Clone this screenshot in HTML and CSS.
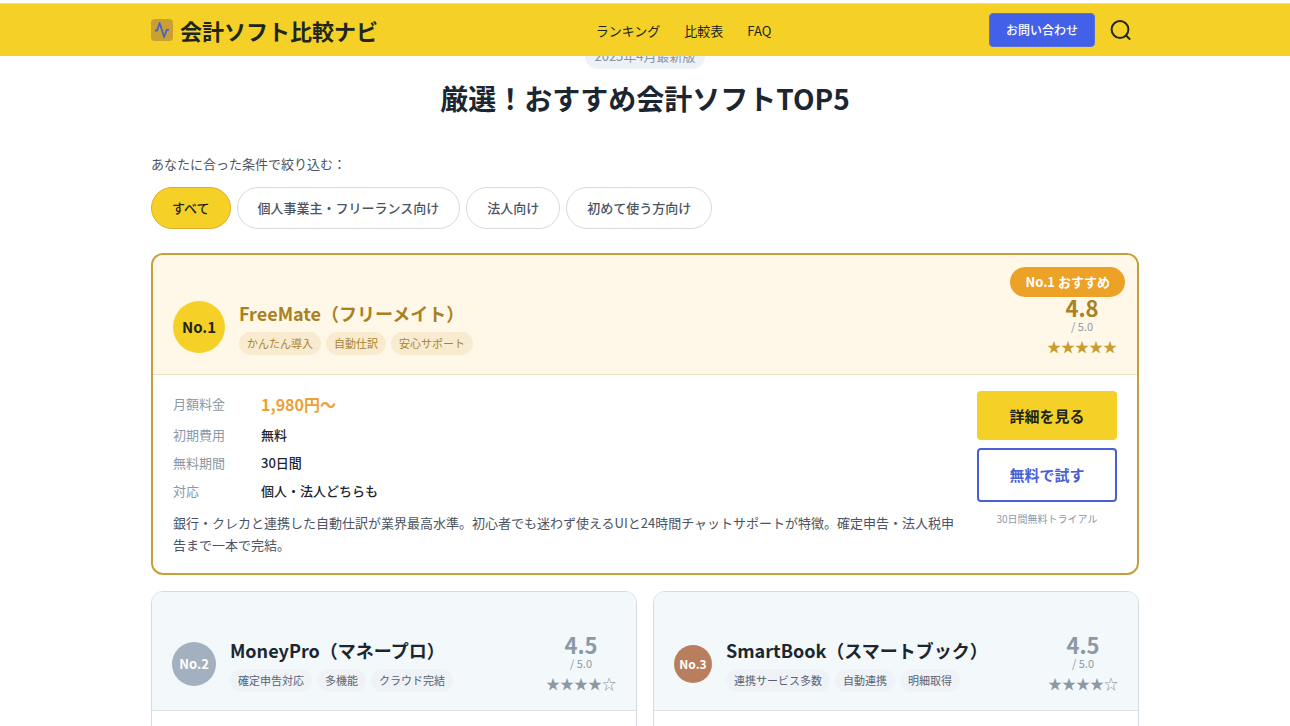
FILE: index.html
```
<!DOCTYPE html>
<html lang="ja">
<head>
    <meta charset="UTF-8">
    <meta name="viewport" content="width=device-width, initial-scale=1.0">
    <title>会計ソフト比較ナビ</title>
    <link rel="stylesheet" href="styles.css">
</head>
<body>
<header class="site-header">
    <div class="container header-inner">
        <a href="#" class="logo">
            <svg class="logo-icon" viewBox="0 0 22 22" aria-hidden="true">
                <rect width="22" height="22" rx="4" fill="#c9a034"/>
                <path d="M4 11.5h2.2L8.6 4l4.6 14 2.6-7.2H18" fill="none" stroke="#4860cc" stroke-width="1.8" stroke-linejoin="round"/>
            </svg>
            <span>会計ソフト比較ナビ</span>
        </a>
        <nav class="nav">
            <a href="#ranking">ランキング</a>
            <a href="#compare">比較表</a>
            <a href="#faq">FAQ</a>
        </nav>
        <div class="header-actions">
            <a href="#contact" class="btn-contact">お問い合わせ</a>
            <button class="btn-search" type="button" aria-label="検索">
                <svg viewBox="0 0 22 22" width="22" height="22" fill="none" stroke="#20261c" stroke-width="2">
                    <circle cx="10" cy="10.5" r="8.4"/>
                    <path d="M15.8 16.2l4.4 4.4"/>
                </svg>
            </button>
        </div>
    </div>
</header>

<main class="container" id="ranking">
    <div class="section-head">
        <span class="update-label">2025年4月最新版</span>
        <h1>厳選！おすすめ会計ソフトTOP5</h1>
    </div>

    <div class="filter">
        <p class="filter-label">あなたに合った条件で絞り込む：</p>
        <div class="filter-buttons">
            <button class="filter-btn active" type="button">すべて</button>
            <button class="filter-btn" type="button">個人事業主・フリーランス向け</button>
            <button class="filter-btn" type="button">法人向け</button>
            <button class="filter-btn" type="button">初めて使う方向け</button>
        </div>
    </div>

    <div class="ranking">
        <article class="card card-first">
            <span class="ribbon">No.1 おすすめ</span>
            <div class="card-head">
                <div class="rank rank-1">No.1</div>
                <div class="card-info">
                    <h2>FreeMate（フリーメイト）</h2>
                    <div class="tags">
                        <span class="tag">かんたん導入</span>
                        <span class="tag">自動仕訳</span>
                        <span class="tag">安心サポート</span>
                    </div>
                </div>
                <div class="score">
                    <div class="score-num">4.8</div>
                    <div class="score-max">/ 5.0</div>
                    <div class="stars">★★★★★</div>
                </div>
            </div>
            <div class="card-body">
                <div class="detail">
                    <dl class="spec">
                        <dt>月額料金</dt>
                        <dd class="price">1,980円〜</dd>
                        <dt>初期費用</dt>
                        <dd>無料</dd>
                        <dt>無料期間</dt>
                        <dd>30日間</dd>
                        <dt>対応</dt>
                        <dd>個人・法人どちらも</dd>
                    </dl>
                    <p class="desc">銀行・クレカと連携した自動仕訳が業界最高水準。初心者でも迷わず使えるUIと24時間チャットサポートが特徴。確定申告・法人税申告まで一本で完結。</p>
                </div>
                <div class="actions">
                    <a href="#detail" class="btn btn-primary">詳細を見る</a>
                    <a href="#trial" class="btn btn-outline">無料で試す</a>
                    <p class="note">30日間無料トライアル</p>
                </div>
            </div>
        </article>

        <article class="card">
            <div class="card-head">
                <div class="rank rank-2">No.2</div>
                <div class="card-info">
                    <h2>MoneyPro（マネープロ）</h2>
                    <div class="tags">
                        <span class="tag">確定申告対応</span>
                        <span class="tag">多機能</span>
                        <span class="tag">クラウド完結</span>
                    </div>
                </div>
                <div class="score">
                    <div class="score-num">4.5</div>
                    <div class="score-max">/ 5.0</div>
                    <div class="stars">★★★★☆</div>
                </div>
            </div>
            <div class="card-body"></div>
        </article>

        <article class="card">
            <div class="card-head">
                <div class="rank rank-3">No.3</div>
                <div class="card-info">
                    <h2>SmartBook（スマートブック）</h2>
                    <div class="tags">
                        <span class="tag">連携サービス多数</span>
                        <span class="tag">自動連携</span>
                        <span class="tag">明細取得</span>
                    </div>
                </div>
                <div class="score">
                    <div class="score-num">4.5</div>
                    <div class="score-max">/ 5.0</div>
                    <div class="stars">★★★★☆</div>
                </div>
            </div>
            <div class="card-body"></div>
        </article>
    </div>
</main>
</body>
</html>
```
FILE: styles.css
```
* {
    box-sizing: border-box;
    margin: 0;
    padding: 0;
}

body {
    font-family: "Noto Sans CJK JP", sans-serif;
    font-size: 13px;
    color: #1c2630;
    background-color: #fff;
    padding-top: 3px;
}

a {
    color: inherit;
    text-decoration: none;
}

button {
    font-family: inherit;
    cursor: pointer;
}

.container {
    width: 100%;
    max-width: 988px;
    margin: 0 auto;
}

/* header */
.site-header {
    position: sticky;
    top: 0;
    z-index: 10;
    background-color: #f5d127;
    border-top: 1px solid #dcdcdc;
    color: #20261c;
}

.header-inner {
    display: flex;
    align-items: center;
    justify-content: space-between;
    height: 52px;
}

.logo {
    display: flex;
    align-items: center;
    gap: 7px;
    font-size: 22px;
    font-weight: 700;
    line-height: 30px;
}

.logo-icon {
    width: 22px;
    height: 22px;
}

.nav {
    display: flex;
    gap: 24px;
}

.header-actions {
    display: flex;
    align-items: center;
    gap: 8px;
}

.btn-contact {
    padding: 0 16px;
    border: 1px solid #5670d8;
    border-radius: 4px;
    background-color: #4361e8;
    color: #fff;
    font-size: 12px;
    font-weight: 500;
    line-height: 32px;
}

.btn-search {
    display: flex;
    padding: 7px;
    border: none;
    background: none;
}

/* heading */
.section-head {
    margin-top: -14px;
    text-align: center;
}

.update-label {
    display: inline-block;
    padding: 0 9px;
    border-radius: 13px;
    background-color: #eef2f8;
    color: #8795a4;
    font-size: 13px;
    line-height: 27px;
    vertical-align: top;
}

h1 {
    margin-top: 8px;
    font-size: 28px;
    font-weight: 700;
    line-height: 42px;
}

/* filter */
.filter {
    margin: 34px 0 24px;
}

.filter-label {
    margin-bottom: 12px;
    color: #4a5463;
    line-height: 22px;
}

.filter-buttons {
    display: flex;
    flex-wrap: wrap;
    gap: 6px;
}

.filter-btn {
    padding: 0 20px;
    border: 1px solid #d5dae1;
    border-radius: 21px;
    background-color: #fff;
    color: #4a5463;
    font-size: 13px;
    font-weight: 500;
    line-height: 40px;
}

.filter-btn.active {
    background-color: #f5d127;
    border-color: #dfae2a;
    color: #20261c;
}

/* ranking cards */
.ranking {
    display: grid;
    grid-template-columns: 1fr 1fr;
    gap: 16px;
}

.card {
    position: relative;
    border: 1px solid #d5dbe2;
    border-radius: 12px;
    background-color: #fff;
    overflow: hidden;
}

.card-first {
    grid-column: 1 / -1;
    border: 2px solid #c5a03a;
}

.ribbon {
    position: absolute;
    top: 12px;
    right: 12px;
    padding: 0 15px;
    border-radius: 15px;
    background-color: #eca127;
    color: #fff;
    font-weight: 700;
    line-height: 30px;
}

.card-head {
    display: flex;
    align-items: center;
    gap: 14px;
    padding: 40px 20px 15px;
    background-color: #f3f8fb;
    border-bottom: 1px solid #dce2e8;
}

.card-first .card-head {
    padding-bottom: 16px;
    background-color: #fff7e8;
    border-bottom-color: #eadfbb;
}

.rank {
    display: flex;
    align-items: center;
    justify-content: center;
    flex-shrink: 0;
    border-radius: 50%;
    color: #fff;
    font-weight: 700;
}

.rank-1 {
    width: 52px;
    height: 52px;
    background-color: #f5d127;
    color: #20261c;
    font-size: 15px;
}

.rank-2 {
    width: 44px;
    height: 44px;
    background-color: #a3b0c0;
}

.rank-3 {
    width: 38px;
    height: 38px;
    background-color: #b97e5d;
    font-size: 12px;
}

.card-info {
    flex: 1;
}

.card-info h2 {
    margin-bottom: 4px;
    font-size: 18px;
    font-weight: 700;
    line-height: 29px;
}

.card-first h2 {
    color: #a88122;
}

.tags {
    display: flex;
    flex-wrap: wrap;
    gap: 5px;
}

.tag {
    padding: 0 8px;
    border-radius: 12px;
    background-color: #eff3f8;
    color: #596270;
    font-size: 11px;
    line-height: 23px;
}

.card-first .tag {
    background-color: #f9ebcf;
    color: #a88432;
}

.score {
    padding-bottom: 1px;
    color: #8c98a5;
    text-align: center;
}

.score-num {
    font-size: 22px;
    font-weight: 700;
    line-height: 24px;
}

.score-max {
    margin-bottom: 1px;
    color: #8c98a5;
    font-size: 11px;
    line-height: 15px;
}

.stars {
    font-size: 14px;
    line-height: 22px;
}

.card-first .score-num {
    color: #a88122;
}

.card-first .stars {
    color: #c99c31;
}

.card-body {
    display: flex;
    gap: 20px;
    padding: 16px 20px 17px;
}

.detail {
    flex: 1;
}

.spec {
    display: grid;
    grid-template-columns: 80px 1fr;
    gap: 8px;
    align-items: center;
    line-height: 20px;
}

.spec dt {
    color: #8c98a5;
}

.spec dd {
    font-weight: 500;
}

.spec .price {
    color: #eca137;
    font-size: 16px;
    font-weight: 700;
    line-height: 26px;
}

.desc {
    margin-top: 11px;
    color: #4a5463;
    line-height: 22px;
}

.actions {
    display: flex;
    flex-direction: column;
    gap: 8px;
    width: 140px;
    text-align: center;
}

.btn {
    border-radius: 4px;
    font-size: 15px;
    font-weight: 700;
}

.btn-primary {
    background-color: #f5d127;
    color: #20261c;
    line-height: 49px;
}

.btn-outline {
    border: 2px solid #4860d4;
    color: #4860d4;
    line-height: 50px;
}

.note {
    color: #8c98a5;
    font-size: 10px;
    line-height: 18px;
}
```
